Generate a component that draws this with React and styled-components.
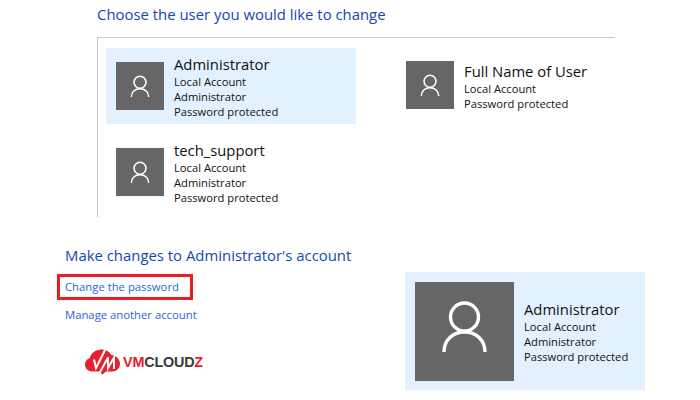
import React from 'react';
import styled, { createGlobalStyle } from 'styled-components';

const GlobalStyle = createGlobalStyle`
  html, body { margin: 0; padding: 0; background: #fff; }
  body { font-family: "Open Sans", "Noto Sans", sans-serif; }
`;

const Page = styled.div`
  width: 700px;
  height: 400px;
  overflow: hidden;
  box-sizing: border-box;
  padding-top: 3px;
`;

const TopSection = styled.section`
  margin-left: 97px;
  width: 518px;
`;

const Title = styled.h2`
  margin: 0;
  font-size: 14.9px;
  line-height: 22px;
  font-weight: 400;
  color: #1546b4;
`;

const Frame = styled.div`
  margin-top: 12px;
  height: 180px;
  box-sizing: border-box;
  border-top: 1px solid #c8c8c8;
  border-left: 1px solid #c8c8c8;
  padding: 10px 0 0 8px;
  display: grid;
  grid-template-columns: 290px 228px;
  grid-auto-rows: 76px;
  row-gap: 10px;
`;

const Card = styled.div`
  display: flex;
  align-items: ${(p) => (p.$large ? 'center' : 'flex-start')};
  gap: 10px;
  box-sizing: border-box;
  width: ${(p) => (p.$large ? '240px' : '250px')};
  height: ${(p) => (p.$large ? '118px' : '76px')};
  margin-top: ${(p) => (p.$large ? '31px' : '0')};
  padding: ${(p) => (p.$large ? '10px' : `${p.$top ?? 14}px 10px`)};
  background: ${(p) => (p.$active ? '#e2f1fd' : 'transparent')};
`;

const Avatar = styled.div`
  flex: none;
  box-sizing: border-box;
  width: ${(p) => (p.$large ? '99px' : '48px')};
  height: ${(p) => (p.$large ? '99px' : '48px')};
  padding-bottom: ${(p) => (p.$large ? '9px' : '0')};
  background: #666;
  display: flex;
  align-items: center;
  justify-content: center;
`;

const Info = styled.div`
  align-self: center;
  padding-top: 2px;
  color: #111;
`;

const Name = styled.div`
  font-size: 14.8px;
  line-height: 17px;
  margin-bottom: 1px;
`;

const Detail = styled.div`
  font-size: 11.2px;
  line-height: 15px;
`;

const BottomSection = styled.section`
  margin: 24px 0 0 57px;
  display: grid;
  grid-template-columns: 348px 240px;
  align-items: start;
`;

const LeftColumn = styled.div`
  padding-top: 4px;
`;

const Heading = styled.h3`
  margin: 0 0 0 8px;
  font-size: 14.9px;
  line-height: 20px;
  font-weight: 400;
  color: #1546b4;
`;

const HighlightLink = styled.a`
  display: block;
  box-sizing: border-box;
  width: 136px;
  height: 26px;
  margin-top: 9px;
  border: 3px solid #ed1c24;
  padding-left: 5px;
  font-size: 11.3px;
  line-height: 20px;
  color: #1f66e0;
`;

const PlainLink = styled.a`
  display: block;
  margin: 7px 0 0 8px;
  font-size: 11.3px;
  line-height: 16px;
  color: #1f66e0;
`;

const Logo = styled.div`
  display: flex;
  align-items: center;
  gap: 3px;
  margin: 26px 0 0 28px;
`;

const LogoText = styled.span`
  font-family: "Liberation Sans", Arial, sans-serif;
  font-size: 14.4px;
  font-weight: 700;
  color: #3a3a3c;
  letter-spacing: -0.2px;
`;

const LogoRed = styled.span`
  color: #e8202e;
`;

function UserIcon({ width, stroke }) {
  return (
    <svg width={width} viewBox="26 18 47 54" fill="none" stroke="#fff" strokeWidth={stroke} strokeLinecap="butt">
      <circle cx="49.5" cy="35" r="14" />
      <path d="M29 70c0-12 9-20 20.500-20S70 58 70 70" />
    </svg>
  );
}

function LogoMark() {
  return (
    <svg width="35" height="26" viewBox="0 0 35 26">
      <path
        fill="#e8202e"
        d="M7.500 22.500C3 22.500 0 19.500 0 15.500 0 12.500 2 10 4.800 9 6.200 4 10.500 0.500 16.500 0.500c4.500 0 8 2 10 5.500C31 6.500 35 10 35 14.800c0 4.500-3.500 7.700-8 7.700h-6l-3.500 3-3-3z"
      />
      <path fill="none" stroke="#fff" strokeWidth="2" d="M9 10.500l2 8.500L20.500 0M14.500 24L23 8.500V19L29 8.500V20" />
    </svg>
  );
}

function UserCard({ name, lines, active, large, top }) {
  return (
    <Card $active={active} $large={large} $top={top}>
      <Avatar $large={large}>
        <UserIcon width={large ? 47 : 20} stroke={large ? 3.4 : 3.6} />
      </Avatar>
      <Info>
        <Name>{name}</Name>
        {lines.map((line) => (
          <Detail key={line}>{line}</Detail>
        ))}
      </Info>
    </Card>
  );
}

const adminLines = ['Local Account', 'Administrator', 'Password protected'];

export default function App() {
  return (
    <Page>
      <GlobalStyle />
      <TopSection>
        <Title>Choose the user you would like to change</Title>
        <Frame>
          <UserCard name="Administrator" lines={adminLines} active />
          <UserCard name="Full Name of User" lines={['Local Account', 'Password protected']} top={13} />
          <UserCard name="tech_support" lines={adminLines} />
        </Frame>
      </TopSection>
      <BottomSection>
        <LeftColumn>
          <Heading>Make changes to Administrator's account</Heading>
          <HighlightLink>Change the password</HighlightLink>
          <PlainLink>Manage another account</PlainLink>
          <Logo>
            <LogoMark />
            <LogoText>
              <LogoRed>VM</LogoRed>CLOUD<LogoRed>Z</LogoRed>
            </LogoText>
          </Logo>
        </LeftColumn>
        <UserCard name="Administrator" lines={adminLines} active large />
      </BottomSection>
    </Page>
  );
}
